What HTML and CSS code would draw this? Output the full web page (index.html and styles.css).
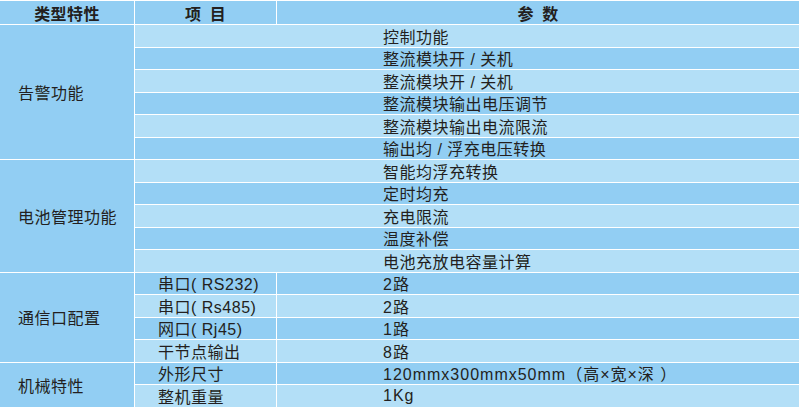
FILE: index.html
```html
<!DOCTYPE html>
<html lang="zh-CN">
<head>
<meta charset="utf-8">
<title>类型特性</title>
<link rel="stylesheet" href="styles.css">
</head>
<body>
<div class="spec">
  <div class="cell head">类型特性</div>
  <div class="cell head">项&ensp;目</div>
  <div class="cell head">参&ensp;数</div>

  <div class="cell cat span6">告警功能</div>
  <div class="cell wide light">控制功能</div>
  <div class="cell wide dark">整流模块开 / 关机</div>
  <div class="cell wide light">整流模块开 / 关机</div>
  <div class="cell wide dark">整流模块输出电压调节</div>
  <div class="cell wide light">整流模块输出电流限流</div>
  <div class="cell wide dark">输出均 / 浮充电压转换</div>

  <div class="cell cat span5">电池管理功能</div>
  <div class="cell wide light">智能均浮充转换</div>
  <div class="cell wide dark">定时均充</div>
  <div class="cell wide light">充电限流</div>
  <div class="cell wide dark">温度补偿</div>
  <div class="cell wide light">电池充放电容量计算</div>

  <div class="cell cat span4">通信口配置</div>
  <div class="cell item dark">串口( RS232)</div>
  <div class="cell val dark">2路</div>
  <div class="cell item light">串口( Rs485)</div>
  <div class="cell val light">2路</div>
  <div class="cell item dark">网口( Rj45)</div>
  <div class="cell val dark">1路</div>
  <div class="cell item light">干节点输出</div>
  <div class="cell val light">8路</div>

  <div class="cell cat span2">机械特性</div>
  <div class="cell item dark">外形尺寸</div>
  <div class="cell val dark">120mmx300mmx50mm（高×宽×深 ）</div>
  <div class="cell item light">整机重量</div>
  <div class="cell val light">1Kg</div>
</div>
</body>
</html>
```

FILE: styles.css
```css
html, body {
  margin: 0;
  padding: 0;
  background: #ffffff;
}

body {
  font-family: "Liberation Sans", "Noto Sans CJK SC", sans-serif;
  font-size: 16px;
  color: #231f20;
}

.spec {
  display: grid;
  grid-template-columns: 134px 141px 1fr;
  grid-template-rows: 23px repeat(17, 21.5px);
  gap: 1px;
  width: 799px;
  margin-top: 1px;
  background: #ffffff;
}

.cell {
  display: flex;
  align-items: center;
  letter-spacing: 0.5px;
  white-space: nowrap;
  overflow: hidden;
}

.head {
  background: #92cef3;
  justify-content: center;
  font-weight: bold;
  letter-spacing: 0.4px;
}

.cat {
  background: #92cef3;
  padding-left: 18px;
}

.span6 { grid-row: span 6; }
.span5 { grid-row: span 5; }
.span4 { grid-row: span 4; }
.span2 { grid-row: span 2; }

.wide {
  grid-column: span 2;
  padding-left: 248px;
}

.item {
  padding-left: 23px;
}

.val {
  padding-left: 106px;
  letter-spacing: 1px;
}

.dark { background: #92cef3; }
.light { background: #b3dff7; }
```
